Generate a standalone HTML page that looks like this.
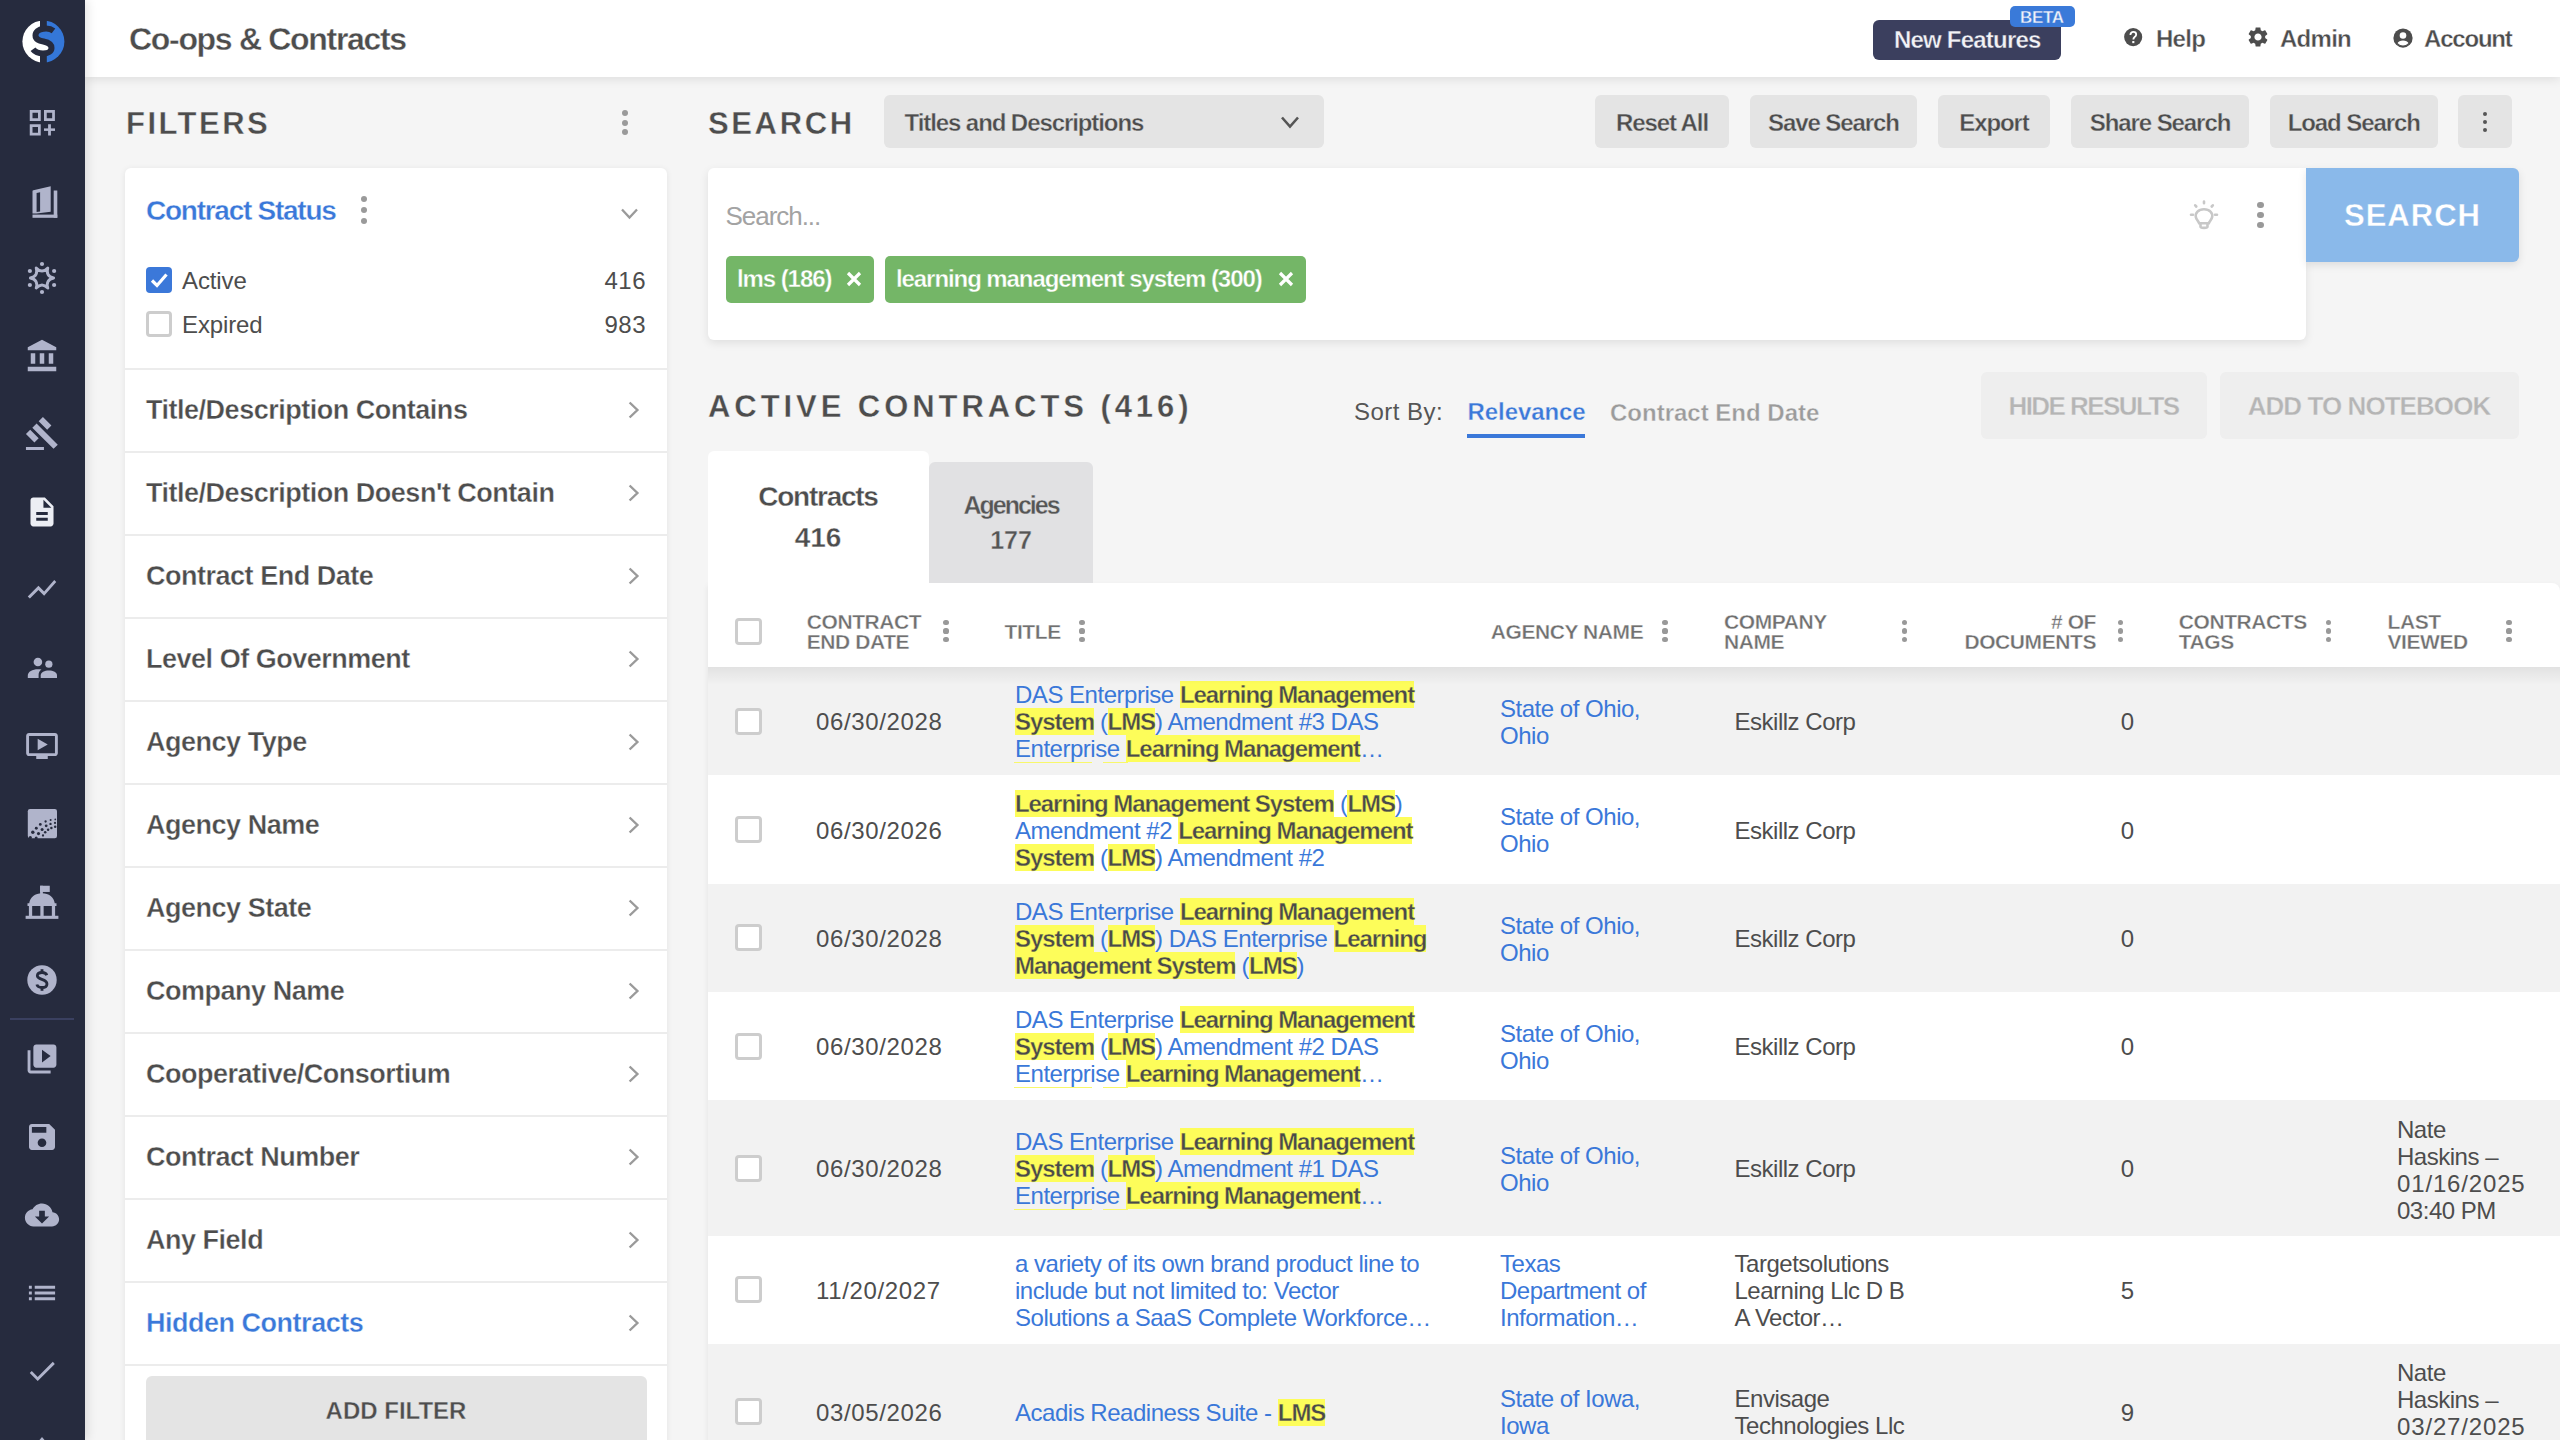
<!DOCTYPE html><html><head><meta charset='utf-8'><style>
html,body{margin:0;padding:0;width:2560px;height:1440px;overflow:hidden;background:#f5f5f5;font-family:"Liberation Sans",sans-serif;}
.r,.t{position:absolute;}
.t{white-space:nowrap;}
svg.r{display:block;overflow:visible}
</style></head><body>
<div class='r' style='left:85px;top:0px;width:2475px;height:77px;background:#ffffff;box-shadow:0 2px 10px rgba(0,0,0,0.10);z-index:2'></div>
<div class='t ' style='left:129px;top:22.91px;font-size:32px;line-height:32px;font-weight:700;color:#4d4d4d;letter-spacing:-0.041em;z-index:3;-webkit-text-stroke:0.35px #fff'>Co-ops &amp; Contracts</div>
<div class='r' style='left:1873px;top:19.5px;width:188px;height:40.5px;background:#3b3f5e;border-radius:6px;z-index:3'></div>
<div class='t ' style='left:1894px;top:28.08px;font-size:24px;line-height:24px;font-weight:700;color:#f2f2f6;letter-spacing:-0.033em;z-index:4;-webkit-text-stroke:0.35px #3b3f5e'>New Features</div>
<div class='r' style='left:2010px;top:6px;width:65px;height:21px;background:#3a7ad9;border-radius:5px;z-index:4'></div>
<div class='t ' style='left:2020px;top:9.01px;font-size:17px;line-height:17px;font-weight:700;color:#eef2fa;letter-spacing:-0.02em;z-index:5;-webkit-text-stroke:0.35px #3a7ad9'>BETA</div>
<svg class='r' style='left:2123px;top:27px;z-index:4' width='22' height='22' viewBox='0 0 24 24'><circle cx='11.1' cy='11' r='9.9' fill='#4d4d4d'/><path d='M8.1 8.6 C8.1 6.6 9.5 5.4 11.3 5.4 C13.1 5.4 14.4 6.6 14.4 8.2 C14.4 9.7 13.4 10.4 12.5 11.1 C11.7 11.7 11.3 12.3 11.3 13.6' fill='none' stroke='#fff' stroke-width='2'/><rect x='10.1' y='15.3' width='2.3' height='2.3' fill='#fff'/></svg>
<div class='t ' style='left:2156px;top:26.68px;font-size:24px;line-height:24px;font-weight:700;color:#4d4d4d;letter-spacing:-0.03em;z-index:4;-webkit-text-stroke:0.35px #fff'>Help</div>
<svg class='r' style='left:2246px;top:25px;z-index:4' width='24' height='24' viewBox='0 0 24 24'><path fill='#4d4d4d' d='M19.14 12.94c.04-.3.06-.61.06-.94 0-.32-.02-.64-.07-.94l2.03-1.58c.18-.14.23-.41.12-.61l-1.92-3.32c-.12-.22-.37-.29-.59-.22l-2.39.96c-.5-.38-1.03-.7-1.62-.94l-.36-2.54c-.04-.24-.24-.41-.48-.41h-3.84c-.24 0-.43.17-.47.41l-.36 2.54c-.59.24-1.13.57-1.62.94l-2.39-.96c-.22-.08-.47 0-.59.22L2.74 8.87c-.12.21-.08.47.12.61l2.03 1.58c-.05.3-.09.63-.09.94s.02.64.07.94l-2.03 1.58c-.18.14-.23.41-.12.61l1.92 3.32c.12.22.37.29.59.22l2.39-.96c.5.38 1.03.7 1.62.94l.36 2.54c.05.24.24.41.48.41h3.84c.24 0 .44-.17.47-.41l.36-2.54c.59-.24 1.13-.56 1.62-.94l2.39.96c.22.08.47 0 .59-.22l1.92-3.32c.12-.22.07-.47-.12-.61l-2.01-1.58zM12 15.6c-1.98 0-3.6-1.62-3.6-3.6s1.62-3.6 3.6-3.6 3.6 1.62 3.6 3.6-1.62 3.6-3.6 3.6z'/></svg>
<div class='t ' style='left:2280px;top:26.68px;font-size:24px;line-height:24px;font-weight:700;color:#4d4d4d;letter-spacing:-0.03em;z-index:4;-webkit-text-stroke:0.35px #fff'>Admin</div>
<svg class='r' style='left:2392px;top:27px;z-index:4' width='22' height='22' viewBox='0 0 24 24'><circle cx='12' cy='12' r='10.5' fill='#4d4d4d'/><circle cx='12' cy='9.3' r='3.6' fill='#fff'/><path d='M5.6 18.2c1.2-2.3 3.6-3.4 6.4-3.4s5.2 1.1 6.4 3.4c-1.6 1.6-3.8 2.6-6.4 2.6s-4.8-1-6.4-2.6z' fill='#fff'/><circle cx='12' cy='12' r='8.8' fill='none' stroke='#4d4d4d' stroke-width='1.2'/></svg>
<div class='t ' style='left:2424px;top:26.68px;font-size:24px;line-height:24px;font-weight:700;color:#4d4d4d;letter-spacing:-0.05em;z-index:4;-webkit-text-stroke:0.35px #fff'>Account</div>
<div class='r' style='left:0px;top:0px;width:85px;height:1440px;background:#262b3e;z-index:10;box-shadow:2px 0 10px rgba(0,0,0,0.12)'></div>
<svg class='r' style='left:21px;top:20px;z-index:11' width='44' height='44' viewBox='0 0 44 44'>
<path d='M22.4 0.5 A21 21 0 0 0 22.4 42.5 Z' fill='#ffffff'/>
<path d='M22.4 0.5 A21 21 0 0 1 22.4 42.5 Z' fill='#3477d8'/>
<path d='M16.5 12.5 L23.5 10.5 V20 L16.5 18.5 Z' fill='#3477d8'/>
<path d='M21.3 23 L28 25 L28 31.5 L21.3 31.5 Z' fill='#ffffff'/>
<rect x='19' y='0' width='6.8' height='7.5' fill='#262b3e'/>
<rect x='19' y='36' width='6.8' height='8' fill='#262b3e'/>
<path d='M32.5 10.8 C29.5 8.6 26 8.3 22.5 8.8 C17.5 9.3 14.5 12 14.5 15.5 C14.5 19.5 18 20.5 22.5 21.5 C27.5 22.5 30.5 24.5 30.5 28 C30.5 31.5 27 33.5 22 33.5 C17.5 33.5 14 32 12 29.3' fill='none' stroke='#262b3e' stroke-width='6'/>
</svg>
<svg class='r' style='left:24px;top:104px;z-index:11' width='36' height='36' viewBox='0 0 36 36'><g fill='none' stroke='#b0b4cb' stroke-width='2.75'><rect x='7.125' y='7.375' width='8.25' height='8.25'/><rect x='21.375' y='7.375' width='8.15' height='8.25'/><rect x='7.125' y='21.625' width='8.25' height='8.5'/></g><g fill='#b0b4cb'><rect x='20' y='24.4' width='11' height='2.5'/><rect x='24.1' y='20.25' width='2.8' height='11.25'/></g></svg>
<svg class='r' style='left:24px;top:184px;z-index:11' width='36' height='36' viewBox='0 0 36 36'><g fill='#b0b4cb'><path d='M8.5 7.3 Q8.5 6.4 9.4 6.2 L26.7 2.2 V27.7 L12.6 29.6 H8.5 Z'/><rect x='8.5' y='30.6' width='24.8' height='3.2'/><rect x='29.7' y='6.5' width='3.6' height='27.3'/></g><path d='M12.6 9 L16.1 8.3 V27.4 L12.6 27.9 Z' fill='#262b3e'/></svg>
<svg class='r' style='left:24px;top:260.4px;z-index:11' width='36' height='36' viewBox='0 0 36 36'><g transform='translate(18,18)'><path fill='none' stroke='#b0b4cb' stroke-width='2.9' stroke-linejoin='round' d='M11.60 0.00 Q3.38 1.95 5.80 10.05 Q0.00 3.90 -5.80 10.05 Q-3.38 1.95 -11.60 0.00 Q-3.38 -1.95 -5.80 -10.05 Q-0.00 -3.90 5.80 -10.05 Q3.38 -1.95 11.60 0.00 Z'/><g fill='#b0b4cb'><circle cx='12.12' cy='7.00' r='2.1'/><circle cx='0.00' cy='14.00' r='2.1'/><circle cx='-12.12' cy='7.00' r='2.1'/><circle cx='-12.12' cy='-7.00' r='2.1'/><circle cx='-0.00' cy='-14.00' r='2.1'/><circle cx='12.12' cy='-7.00' r='2.1'/></g></g></svg>
<svg class='r' style='left:24.0px;top:339.0px;z-index:11' width='36' height='36' viewBox='0 0 24 24'><g transform='translate(12,12) scale(1.0) translate(-12,-12)'><path fill='#b0b4cb' d='M4 10v7h3v-7H4zm6 0v7h3v-7h-3zM2 22h19v-3H2v3zm14-12v7h3v-7h-3zm-4.5-9L2 6v2h19V6l-9.5-5z' transform='translate(0.5,-0.5)'/></g></svg>
<svg class='r' style='left:24.0px;top:415.8px;z-index:11' width='36' height='36' viewBox='0 0 24 24'><g transform='translate(12,12) scale(1.0) translate(-12,-12)'><path fill='#b0b4cb' d='M1 21h12v2H1zM5.245 8.07l2.83-2.827 14.14 14.142-2.828 2.828zM12.317 1l5.657 5.656-2.83 2.83-5.654-5.66zM3.825 9.485l5.657 5.657-2.828 2.828-5.657-5.657z' transform='translate(0.3,-0.3)'/></g></svg>
<svg class='r' style='left:24.0px;top:494.20000000000005px;z-index:11' width='36' height='36' viewBox='0 0 24 24'><g transform='translate(12,12) scale(0.96) translate(-12,-12)'><path fill='#eceef4' d='M14 2H6c-1.1 0-1.99.9-1.99 2L4 20c0 1.1.89 2 1.99 2H18c1.1 0 2-.9 2-2V8l-6-6zm2 16H8v-2h8v2zm0-4H8v-2h8v2zm-3-5V3.5L18.5 9H13z'/></g></svg>
<svg class='r' style='left:24.0px;top:572.0px;z-index:11' width='36' height='36' viewBox='0 0 24 24'><g transform='translate(12,12) scale(0.95) translate(-12,-12)'><path fill='#b0b4cb' d='M3.5 18.49l6-6.01 4 4L22 6.92l-1.41-1.41-7.09 7.97-4-4L2 16.99z' transform='translate(0,-0.5)'/></g></svg>
<svg class='r' style='left:24px;top:650px;z-index:11' width='36' height='36' viewBox='0 0 36 36'><g fill='#b0b4cb'><circle cx='13.9' cy='12' r='4.3'/><circle cx='24.85' cy='14.2' r='3.6'/><path d='M3.8 28 V25.5 C3.8 21.5 8.5 19.2 13.9 19.2 C15.2 19.2 16.4 19.35 17.5 19.6 C15.6 20.8 14.6 22.8 14.6 25 V28 Z'/><path d='M16.7 28 V25.5 C16.7 22 20.5 20.5 24.85 20.5 C29.2 20.5 33 22 33 25.5 V28 Z'/></g></svg>
<svg class='r' style='left:24.0px;top:728.0px;z-index:11' width='36' height='36' viewBox='0 0 24 24'><g transform='translate(12,12) scale(0.96) translate(-12,-12)'><path fill='#b0b4cb' d='M21 3H3c-1.11 0-2 .89-2 2v12c0 1.1.89 2 2 2h5v2h8v-2h5c1.1 0 1.99-.9 1.99-2L23 5c0-1.11-.9-2-2-2zm0 14H3V5h18v12zM16 11l-7 4V7z'/></g></svg>
<svg class='r' style='left:24px;top:804px;z-index:11' width='36' height='36' viewBox='0 0 36 36'><rect x='3.8' y='5' width='29.2' height='29.2' rx='2.2' fill='#b0b4cb'/><g fill='#262b3e'><circle cx='8.80' cy='28.30' r='1.7'/><circle cx='12.30' cy='24.20' r='1.45'/><circle cx='16.30' cy='20.40' r='1.4'/><circle cx='21.60' cy='17.50' r='1.15'/><circle cx='26.60' cy='16.10' r='1.0'/><circle cx='31.30' cy='15.40' r='0.85'/><circle cx='14.50' cy='29.60' r='1.55'/><circle cx='18.10' cy='25.60' r='1.5'/><circle cx='22.20' cy='21.80' r='1.4'/><circle cx='26.50' cy='19.90' r='1.2'/><circle cx='31.00' cy='18.90' r='1.1'/><circle cx='19.00' cy='31.50' r='1.15'/><circle cx='21.20' cy='28.30' r='1.25'/><circle cx='24.10' cy='25.70' r='1.25'/><circle cx='27.40' cy='23.90' r='1.25'/><circle cx='31.20' cy='22.80' r='1.25'/><circle cx='6.30' cy='33.60' r='1.6'/><circle cx='12.20' cy='34.10' r='1.5'/></g></svg>
<svg class='r' style='left:24.0px;top:884.9px;z-index:11' width='36' height='36' viewBox='0 0 24 24'><g transform='translate(12,12) scale(1.15) translate(-12,-12)'><g fill='#b0b4cb'><rect x='10.9' y='2' width='1.6' height='5'/><rect x='10.9' y='2' width='5.6' height='3.6'/><path d='M4.6 12.2 C5 8.6 8 6.3 12 6.3 C16 6.3 19 8.6 19.4 12.2 H20.4 V13.7 H3.6 V12.2z'/><rect x='4.4' y='13.7' width='1.9' height='6'/><rect x='11.05' y='13.7' width='1.9' height='6'/><rect x='17.7' y='13.7' width='1.9' height='6'/><rect x='2.5' y='19.4' width='19' height='1.8'/></g></g></svg>
<svg class='r' style='left:24.0px;top:961.5px;z-index:11' width='36' height='36' viewBox='0 0 24 24'><g transform='translate(12,12) scale(1.0) translate(-12,-12)'><circle cx='12' cy='12' r='9.8' fill='#b0b4cb'/><path fill='none' stroke='#262b3e' stroke-width='1.9' d='M15.2 8.8 C14.8 7.6 13.6 7 12 7 C10.1 7 8.9 7.9 8.9 9.2 C8.9 12.2 15.3 11 15.3 14.6 C15.3 16 14 17 12 17 C10.2 17 8.9 16.3 8.6 15'/><rect x='11.05' y='4.8' width='1.9' height='2.8' fill='#262b3e'/><rect x='11.05' y='16.4' width='1.9' height='2.8' fill='#262b3e'/></g></svg>
<div class='r' style='left:10px;top:1018px;width:64px;height:2px;background:#3a4060;z-index:11'></div>
<svg class='r' style='left:24.0px;top:1040.7px;z-index:11' width='36' height='36' viewBox='0 0 24 24'><g transform='translate(12,12) scale(0.96) translate(-12,-12)'><path fill='#b0b4cb' d='M4 6H2v14c0 1.1.9 2 2 2h14v-2H4V6zm16-4H8c-1.1 0-2 .9-2 2v12c0 1.1.9 2 2 2h12c1.1 0 2-.9 2-2V4c0-1.1-.9-2-2-2zm-8 12.5v-9l6 4.5-6 4.5z'/></g></svg>
<svg class='r' style='left:24.0px;top:1119.0px;z-index:11' width='36' height='36' viewBox='0 0 24 24'><g transform='translate(12,12) scale(0.963) translate(-12,-12)'><path fill='#b0b4cb' d='M17 3H5c-1.11 0-2 .9-2 2v14c0 1.1.89 2 2 2h14c1.1 0 2-.9 2-2V7l-4-4zm-5 16c-1.66 0-3-1.34-3-3s1.34-3 3-3 3 1.34 3 3-1.34 3-3 3zm3-10H5V5h10v4z'/></g></svg>
<svg class='r' style='left:24.0px;top:1196.5px;z-index:11' width='36' height='36' viewBox='0 0 24 24'><g transform='translate(12,12) scale(0.95) translate(-12,-12)'><path fill='#b0b4cb' d='M19.35 10.04C18.67 6.59 15.64 4 12 4 9.11 4 6.6 5.64 5.35 8.04 2.34 8.36 0 10.91 0 14c0 3.31 2.69 6 6 6h13c2.76 0 5-2.24 5-5 0-2.64-2.05-4.78-4.65-4.96zM17 13l-5 5-5-5h3V9h4v4h3z'/></g></svg>
<svg class='r' style='left:24.0px;top:1274.8px;z-index:11' width='36' height='36' viewBox='0 0 24 24'><g transform='translate(12,12) scale(0.97) translate(-12,-12)'><path fill='#b0b4cb' d='M3 13h2v-2H3v2zm0 4h2v-2H3v2zm0-8h2V7H3v2zm4 4h14v-2H7v2zm0 4h14v-2H7v2zM7 7v2h14V7H7z'/></g></svg>
<svg class='r' style='left:24.0px;top:1353.0px;z-index:11' width='36' height='36' viewBox='0 0 24 24'><g transform='translate(12,12) scale(0.95) translate(-12,-12)'><path fill='#b0b4cb' d='M9 16.17L4.83 12l-1.42 1.41L9 19 21 7l-1.41-1.41z'/></g></svg>
<svg class='r' style='left:24.0px;top:1434.0px;z-index:11' width='36' height='36' viewBox='0 0 24 24'><g transform='translate(12,12) scale(1.0) translate(-12,-12)'><path fill='#b0b4cb' d='M12 2 L17 8 H7 Z'/></g></svg>
<div class='t ' style='left:126px;top:107.75px;font-size:31px;line-height:31px;font-weight:700;color:#4d4d4d;letter-spacing:0.08em;;-webkit-text-stroke:0.35px #f5f5f5'>FILTERS</div>
<div class='r' style='left:622.0px;top:110.0px;width:6px;height:6px;border-radius:50%;background:#9a9a9a'></div>
<div class='r' style='left:622.0px;top:119.5px;width:6px;height:6px;border-radius:50%;background:#9a9a9a'></div>
<div class='r' style='left:622.0px;top:129.0px;width:6px;height:6px;border-radius:50%;background:#9a9a9a'></div>
<div class='r' style='left:125px;top:168px;width:542px;height:1300px;background:#ffffff;border-radius:6px;box-shadow:0 1px 6px rgba(0,0,0,0.08)'></div>
<div class='t ' style='left:146px;top:197.29px;font-size:28px;line-height:28px;font-weight:700;color:#3a78d9;letter-spacing:-0.045em;;-webkit-text-stroke:0.35px #fff'>Contract Status</div>
<div class='r' style='left:360.9px;top:196.1px;width:6.2px;height:6.2px;border-radius:50%;background:#9a9a9a'></div>
<div class='r' style='left:360.9px;top:206.9px;width:6.2px;height:6.2px;border-radius:50%;background:#9a9a9a'></div>
<div class='r' style='left:360.9px;top:217.7px;width:6.2px;height:6.2px;border-radius:50%;background:#9a9a9a'></div>
<svg class='r' style='left:600px;top:190px;' width='60' height='40' viewBox='0 0 60 40'><path d='M22 19.5 L29.5 27.5 L37 19.5' fill='none' stroke='#9a9a9a' stroke-width='2.3'/></svg>
<div class='r' style='left:146px;top:267px;width:26px;height:26px;background:#3b78d9;border-radius:4px'></div>
<svg class='r' style='left:146px;top:267px;' width='26' height='26' viewBox='0 0 26 26'><path d='M6 13.5 L11 18.5 L20.5 7.5' fill='none' stroke='#fff' stroke-width='3.2'/></svg>
<div class='t ' style='left:182px;top:269.18px;font-size:24px;line-height:24px;font-weight:400;color:#4d4d4d;letter-spacing:-0.005em;'>Active</div>
<div class='t ' style='right:1914px;top:269.18px;font-size:24px;line-height:24px;font-weight:400;color:#4d4d4d;letter-spacing:0.02em;'>416</div>
<div class='r' style='left:146px;top:311px;width:26px;height:26px;background:#ffffff;border-radius:4px;box-sizing:border-box;border:3px solid #cdcdcd'></div>
<div class='t ' style='left:182px;top:313.18px;font-size:24px;line-height:24px;font-weight:400;color:#4d4d4d;letter-spacing:-0.005em;'>Expired</div>
<div class='t ' style='right:1914px;top:313.18px;font-size:24px;line-height:24px;font-weight:400;color:#4d4d4d;letter-spacing:0.02em;'>983</div>
<div class='r' style='left:125px;top:368px;width:542px;height:1.5px;background:#ececec;'></div>
<div class='t ' style='left:146px;top:396.84px;font-size:27px;line-height:27px;font-weight:700;color:#4d4d4d;letter-spacing:-0.018em;;-webkit-text-stroke:0.35px #fff'>Title/Description Contains</div>
<svg class='r' style='left:600px;top:368px;' width='60' height='83' viewBox='0 0 60 83'><path d='M29.6 34.5 L37.4 42 L29.6 49.5' fill='none' stroke='#9a9a9a' stroke-width='2.4'/></svg>
<div class='r' style='left:125px;top:451px;width:542px;height:1.5px;background:#ececec;'></div>
<div class='t ' style='left:146px;top:479.84px;font-size:27px;line-height:27px;font-weight:700;color:#4d4d4d;letter-spacing:-0.018em;;-webkit-text-stroke:0.35px #fff'>Title/Description Doesn't Contain</div>
<svg class='r' style='left:600px;top:451px;' width='60' height='83' viewBox='0 0 60 83'><path d='M29.6 34.5 L37.4 42 L29.6 49.5' fill='none' stroke='#9a9a9a' stroke-width='2.4'/></svg>
<div class='r' style='left:125px;top:534px;width:542px;height:1.5px;background:#ececec;'></div>
<div class='t ' style='left:146px;top:562.84px;font-size:27px;line-height:27px;font-weight:700;color:#4d4d4d;letter-spacing:-0.018em;;-webkit-text-stroke:0.35px #fff'>Contract End Date</div>
<svg class='r' style='left:600px;top:534px;' width='60' height='83' viewBox='0 0 60 83'><path d='M29.6 34.5 L37.4 42 L29.6 49.5' fill='none' stroke='#9a9a9a' stroke-width='2.4'/></svg>
<div class='r' style='left:125px;top:617px;width:542px;height:1.5px;background:#ececec;'></div>
<div class='t ' style='left:146px;top:645.84px;font-size:27px;line-height:27px;font-weight:700;color:#4d4d4d;letter-spacing:-0.018em;;-webkit-text-stroke:0.35px #fff'>Level Of Government</div>
<svg class='r' style='left:600px;top:617px;' width='60' height='83' viewBox='0 0 60 83'><path d='M29.6 34.5 L37.4 42 L29.6 49.5' fill='none' stroke='#9a9a9a' stroke-width='2.4'/></svg>
<div class='r' style='left:125px;top:700px;width:542px;height:1.5px;background:#ececec;'></div>
<div class='t ' style='left:146px;top:728.84px;font-size:27px;line-height:27px;font-weight:700;color:#4d4d4d;letter-spacing:-0.018em;;-webkit-text-stroke:0.35px #fff'>Agency Type</div>
<svg class='r' style='left:600px;top:700px;' width='60' height='83' viewBox='0 0 60 83'><path d='M29.6 34.5 L37.4 42 L29.6 49.5' fill='none' stroke='#9a9a9a' stroke-width='2.4'/></svg>
<div class='r' style='left:125px;top:783px;width:542px;height:1.5px;background:#ececec;'></div>
<div class='t ' style='left:146px;top:811.84px;font-size:27px;line-height:27px;font-weight:700;color:#4d4d4d;letter-spacing:-0.018em;;-webkit-text-stroke:0.35px #fff'>Agency Name</div>
<svg class='r' style='left:600px;top:783px;' width='60' height='83' viewBox='0 0 60 83'><path d='M29.6 34.5 L37.4 42 L29.6 49.5' fill='none' stroke='#9a9a9a' stroke-width='2.4'/></svg>
<div class='r' style='left:125px;top:866px;width:542px;height:1.5px;background:#ececec;'></div>
<div class='t ' style='left:146px;top:894.84px;font-size:27px;line-height:27px;font-weight:700;color:#4d4d4d;letter-spacing:-0.018em;;-webkit-text-stroke:0.35px #fff'>Agency State</div>
<svg class='r' style='left:600px;top:866px;' width='60' height='83' viewBox='0 0 60 83'><path d='M29.6 34.5 L37.4 42 L29.6 49.5' fill='none' stroke='#9a9a9a' stroke-width='2.4'/></svg>
<div class='r' style='left:125px;top:949px;width:542px;height:1.5px;background:#ececec;'></div>
<div class='t ' style='left:146px;top:977.84px;font-size:27px;line-height:27px;font-weight:700;color:#4d4d4d;letter-spacing:-0.018em;;-webkit-text-stroke:0.35px #fff'>Company Name</div>
<svg class='r' style='left:600px;top:949px;' width='60' height='83' viewBox='0 0 60 83'><path d='M29.6 34.5 L37.4 42 L29.6 49.5' fill='none' stroke='#9a9a9a' stroke-width='2.4'/></svg>
<div class='r' style='left:125px;top:1032px;width:542px;height:1.5px;background:#ececec;'></div>
<div class='t ' style='left:146px;top:1060.84px;font-size:27px;line-height:27px;font-weight:700;color:#4d4d4d;letter-spacing:-0.018em;;-webkit-text-stroke:0.35px #fff'>Cooperative/Consortium</div>
<svg class='r' style='left:600px;top:1032px;' width='60' height='83' viewBox='0 0 60 83'><path d='M29.6 34.5 L37.4 42 L29.6 49.5' fill='none' stroke='#9a9a9a' stroke-width='2.4'/></svg>
<div class='r' style='left:125px;top:1115px;width:542px;height:1.5px;background:#ececec;'></div>
<div class='t ' style='left:146px;top:1143.84px;font-size:27px;line-height:27px;font-weight:700;color:#4d4d4d;letter-spacing:-0.018em;;-webkit-text-stroke:0.35px #fff'>Contract Number</div>
<svg class='r' style='left:600px;top:1115px;' width='60' height='83' viewBox='0 0 60 83'><path d='M29.6 34.5 L37.4 42 L29.6 49.5' fill='none' stroke='#9a9a9a' stroke-width='2.4'/></svg>
<div class='r' style='left:125px;top:1198px;width:542px;height:1.5px;background:#ececec;'></div>
<div class='t ' style='left:146px;top:1226.84px;font-size:27px;line-height:27px;font-weight:700;color:#4d4d4d;letter-spacing:-0.018em;;-webkit-text-stroke:0.35px #fff'>Any Field</div>
<svg class='r' style='left:600px;top:1198px;' width='60' height='83' viewBox='0 0 60 83'><path d='M29.6 34.5 L37.4 42 L29.6 49.5' fill='none' stroke='#9a9a9a' stroke-width='2.4'/></svg>
<div class='r' style='left:125px;top:1281px;width:542px;height:1.5px;background:#ececec;'></div>
<div class='t ' style='left:146px;top:1309.84px;font-size:27px;line-height:27px;font-weight:700;color:#3a78d9;letter-spacing:-0.018em;;-webkit-text-stroke:0.35px #fff'>Hidden Contracts</div>
<svg class='r' style='left:600px;top:1281px;' width='60' height='83' viewBox='0 0 60 83'><path d='M29.6 34.5 L37.4 42 L29.6 49.5' fill='none' stroke='#9a9a9a' stroke-width='2.4'/></svg>
<div class='r' style='left:125px;top:1364px;width:542px;height:1.5px;background:#ececec;'></div>
<div class='r' style='left:146px;top:1376px;width:501px;height:80px;background:#e4e4e4;border-radius:6px'></div>
<div class='t ' style='left:-104px;width:1000px;text-align:center;top:1398.68px;font-size:24px;line-height:24px;font-weight:700;color:#4d4d4d;letter-spacing:0.0em;;-webkit-text-stroke:0.35px #e4e4e4'>ADD FILTER</div>
<div class='t ' style='left:708px;top:107.75px;font-size:31px;line-height:31px;font-weight:700;color:#4d4d4d;letter-spacing:0.085em;;-webkit-text-stroke:0.35px #f5f5f5'>SEARCH</div>
<div class='r' style='left:884px;top:95px;width:440px;height:53px;background:#e4e4e4;border-radius:6px'></div>
<div class='t ' style='left:904.5px;top:110.68px;font-size:24px;line-height:24px;font-weight:700;color:#4d4d4d;letter-spacing:-0.045em;;-webkit-text-stroke:0.35px #e4e4e4'>Titles and Descriptions</div>
<svg class='r' style='left:1270px;top:105px;' width='40' height='40' viewBox='0 0 40 40'><path d='M12 12.5 L20 21.5 L28 12.5' fill='none' stroke='#555' stroke-width='2.6'/></svg>
<div class='r' style='left:1595px;top:95px;width:134px;height:53px;background:#e4e4e4;border-radius:6px'></div>
<div class='t ' style='left:1162.0px;width:1000px;text-align:center;top:110.68px;font-size:24px;line-height:24px;font-weight:700;color:#4d4d4d;letter-spacing:-0.045em;;-webkit-text-stroke:0.35px #e4e4e4'>Reset All</div>
<div class='r' style='left:1750px;top:95px;width:167px;height:53px;background:#e4e4e4;border-radius:6px'></div>
<div class='t ' style='left:1333.5px;width:1000px;text-align:center;top:110.68px;font-size:24px;line-height:24px;font-weight:700;color:#4d4d4d;letter-spacing:-0.045em;;-webkit-text-stroke:0.35px #e4e4e4'>Save Search</div>
<div class='r' style='left:1938px;top:95px;width:112px;height:53px;background:#e4e4e4;border-radius:6px'></div>
<div class='t ' style='left:1494.0px;width:1000px;text-align:center;top:110.68px;font-size:24px;line-height:24px;font-weight:700;color:#4d4d4d;letter-spacing:-0.045em;;-webkit-text-stroke:0.35px #e4e4e4'>Export</div>
<div class='r' style='left:2071px;top:95px;width:178px;height:53px;background:#e4e4e4;border-radius:6px'></div>
<div class='t ' style='left:1660.0px;width:1000px;text-align:center;top:110.68px;font-size:24px;line-height:24px;font-weight:700;color:#4d4d4d;letter-spacing:-0.045em;;-webkit-text-stroke:0.35px #e4e4e4'>Share Search</div>
<div class='r' style='left:2270px;top:95px;width:167.5px;height:53px;background:#e4e4e4;border-radius:6px'></div>
<div class='t ' style='left:1853.75px;width:1000px;text-align:center;top:110.68px;font-size:24px;line-height:24px;font-weight:700;color:#4d4d4d;letter-spacing:-0.045em;;-webkit-text-stroke:0.35px #e4e4e4'>Load Search</div>
<div class='r' style='left:2458px;top:95px;width:54px;height:53px;background:#e4e4e4;border-radius:6px'></div>
<div class='r' style='left:2482.8px;top:111.8px;width:4.4px;height:4.4px;border-radius:50%;background:#555'></div>
<div class='r' style='left:2482.8px;top:119.8px;width:4.4px;height:4.4px;border-radius:50%;background:#555'></div>
<div class='r' style='left:2482.8px;top:127.8px;width:4.4px;height:4.4px;border-radius:50%;background:#555'></div>
<div class='r' style='left:708px;top:168px;width:1598px;height:172px;background:#ffffff;border-radius:6px 0 6px 6px;box-shadow:0 3px 10px rgba(0,0,0,0.09)'></div>
<div class='t ' style='left:725.5px;top:202.99px;font-size:26px;line-height:26px;font-weight:400;color:#a3a3a3;letter-spacing:-0.04em;'>Search...</div>
<svg class='r' style='left:2186px;top:197px;' width='36' height='36' viewBox='0 0 36 36'><g fill='none' stroke='#c8c8c8' stroke-width='2.6' stroke-linecap='round'><path d='M13.2 26.3 C12.5 24 10.4 22.6 9.9 20.3 C9 16 12.4 12.3 18 12.3 C23.6 12.3 27 16 26.1 20.3 C25.6 22.6 23.5 24 22.8 26.3 Z'/><path d='M14.5 26.5 V29.5 C14.5 31.5 21.5 31.5 21.5 29.5 V26.5'/><path d='M18 4.6 V6.2 M9.2 8.3 L10.3 9.5 M26.8 8.3 L25.7 9.5 M5 17.8 H7 M29 17.8 H31'/></g></svg>
<div class='r' style='left:2257.0px;top:201.5px;width:6.6px;height:6.6px;border-radius:50%;background:#999'></div>
<div class='r' style='left:2257.0px;top:211.7px;width:6.6px;height:6.6px;border-radius:50%;background:#999'></div>
<div class='r' style='left:2257.0px;top:221.9px;width:6.6px;height:6.6px;border-radius:50%;background:#999'></div>
<div class='r' style='left:2306px;top:168px;width:213px;height:94px;background:#8ab9ea;border-radius:0 6px 6px 0;box-shadow:0 3px 8px rgba(0,0,0,0.10)'></div>
<div class='t ' style='left:1912.5px;width:1000px;text-align:center;top:199.75px;font-size:31px;line-height:31px;font-weight:700;color:#ffffff;letter-spacing:0.033em;;-webkit-text-stroke:0.35px #8ab9ea'>SEARCH</div>
<div class='r' style='left:726px;top:256px;width:148px;height:46.5px;background:#74b667;border-radius:5px'></div>
<div class='t ' style='left:737px;top:266.68px;font-size:24px;line-height:24px;font-weight:700;color:#ffffff;letter-spacing:-0.045em;;-webkit-text-stroke:0.35px #74b667'>lms (186)</div>
<svg class='r' style='left:844px;top:269px;' width='20' height='20' viewBox='0 0 20 20'><path d='M4 4 L16 16 M16 4 L4 16' stroke='#fff' stroke-width='3.2'/></svg>
<div class='r' style='left:884.75px;top:256px;width:421px;height:46.5px;background:#74b667;border-radius:5px'></div>
<div class='t ' style='left:896px;top:266.68px;font-size:24px;line-height:24px;font-weight:700;color:#ffffff;letter-spacing:-0.045em;;-webkit-text-stroke:0.35px #74b667'>learning management system (300)</div>
<svg class='r' style='left:1276px;top:269px;' width='20' height='20' viewBox='0 0 20 20'><path d='M4 4 L16 16 M16 4 L4 16' stroke='#fff' stroke-width='3.2'/></svg>
<div class='t ' style='left:708px;top:391.25px;font-size:31px;line-height:31px;font-weight:700;color:#4d4d4d;letter-spacing:0.127em;;-webkit-text-stroke:0.35px #f5f5f5'>ACTIVE CONTRACTS (416)</div>
<div class='t ' style='left:1354px;top:400.18px;font-size:24px;line-height:24px;font-weight:400;color:#555;letter-spacing:0.02em;'>Sort By:</div>
<div class='t ' style='left:1467.5px;top:400.18px;font-size:24px;line-height:24px;font-weight:700;color:#3a78d9;letter-spacing:-0.003em;;-webkit-text-stroke:0.35px #f5f5f5'>Relevance</div>
<div class='r' style='left:1467px;top:434px;width:118px;height:4px;background:#3a78d9;'></div>
<div class='t ' style='left:1610px;top:400.68px;font-size:24px;line-height:24px;font-weight:700;color:#9b9b9b;letter-spacing:0.0em;;-webkit-text-stroke:0.35px #f5f5f5'>Contract End Date</div>
<div class='r' style='left:1981px;top:372px;width:226px;height:67px;background:#eeeeee;border-radius:6px'></div>
<div class='t ' style='left:1593.5px;width:1000px;text-align:center;top:392.69px;font-size:26px;line-height:26px;font-weight:700;color:#b5b5b5;letter-spacing:-0.06em;;-webkit-text-stroke:0.35px #eeeeee'>HIDE RESULTS</div>
<div class='r' style='left:2220px;top:372px;width:299px;height:67px;background:#eeeeee;border-radius:6px'></div>
<div class='t ' style='left:1869px;width:1000px;text-align:center;top:392.69px;font-size:26px;line-height:26px;font-weight:700;color:#b5b5b5;letter-spacing:-0.036em;;-webkit-text-stroke:0.35px #eeeeee'>ADD TO NOTEBOOK</div>
<div class='r' style='left:929px;top:462px;width:164px;height:121px;background:#e1e1e3;border-radius:6px 6px 0 0;z-index:2'></div>
<div class='r' style='left:708px;top:451px;width:221px;height:133px;background:#ffffff;border-radius:6px 6px 0 0;z-index:2'></div>
<div class='t ' style='left:318px;width:1000px;text-align:center;top:483.29px;font-size:28px;line-height:28px;font-weight:700;color:#4d4d4d;letter-spacing:-0.045em;z-index:3;-webkit-text-stroke:0.35px #fff'>Contracts</div>
<div class='t ' style='left:318px;width:1000px;text-align:center;top:523.79px;font-size:28px;line-height:28px;font-weight:700;color:#4d4d4d;letter-spacing:0.0em;z-index:3;-webkit-text-stroke:0.35px #fff'>416</div>
<div class='t ' style='left:511px;width:1000px;text-align:center;top:492.83px;font-size:25px;line-height:25px;font-weight:700;color:#555;letter-spacing:-0.08em;z-index:3;-webkit-text-stroke:0.35px #e1e1e3'>Agencies</div>
<div class='t ' style='left:511px;width:1000px;text-align:center;top:527.83px;font-size:25px;line-height:25px;font-weight:700;color:#555;letter-spacing:0.0em;z-index:3;-webkit-text-stroke:0.35px #e1e1e3'>177</div>
<div class='r' style='left:708px;top:583px;width:1852px;height:900px;background:#ffffff;border-radius:0 8px 0 0;box-shadow:0 3px 6px rgba(0,0,0,0.08)'></div>
<div class='r' style='left:735px;top:618px;width:27px;height:27px;background:#fff;border-radius:4px;box-sizing:border-box;border:3px solid #cdcdcd;z-index:3'></div>
<div class='t ' style='left:806.75px;top:611.22px;font-size:21px;line-height:21px;font-weight:700;color:#707070;letter-spacing:-0.02em;z-index:3;-webkit-text-stroke:0.35px #fff'>CONTRACT</div>
<div class='t ' style='left:806.75px;top:631.22px;font-size:21px;line-height:21px;font-weight:700;color:#707070;letter-spacing:-0.02em;z-index:3;-webkit-text-stroke:0.35px #fff'>END DATE</div>
<div class='r' style='left:943.4px;top:619.8px;width:5.2px;height:5.2px;border-radius:50%;background:#999'></div>
<div class='r' style='left:943.4px;top:628.4px;width:5.2px;height:5.2px;border-radius:50%;background:#999'></div>
<div class='r' style='left:943.4px;top:637.0px;width:5.2px;height:5.2px;border-radius:50%;background:#999'></div>
<div class='t ' style='left:1004.5px;top:621.22px;font-size:21px;line-height:21px;font-weight:700;color:#707070;letter-spacing:-0.02em;z-index:3;-webkit-text-stroke:0.35px #fff'>TITLE</div>
<div class='r' style='left:1079.4px;top:619.8px;width:5.2px;height:5.2px;border-radius:50%;background:#999'></div>
<div class='r' style='left:1079.4px;top:628.4px;width:5.2px;height:5.2px;border-radius:50%;background:#999'></div>
<div class='r' style='left:1079.4px;top:637.0px;width:5.2px;height:5.2px;border-radius:50%;background:#999'></div>
<div class='t ' style='left:1490.75px;top:621.22px;font-size:21px;line-height:21px;font-weight:700;color:#707070;letter-spacing:-0.02em;z-index:3;-webkit-text-stroke:0.35px #fff'>AGENCY NAME</div>
<div class='r' style='left:1662.4px;top:619.8px;width:5.2px;height:5.2px;border-radius:50%;background:#999'></div>
<div class='r' style='left:1662.4px;top:628.4px;width:5.2px;height:5.2px;border-radius:50%;background:#999'></div>
<div class='r' style='left:1662.4px;top:637.0px;width:5.2px;height:5.2px;border-radius:50%;background:#999'></div>
<div class='t ' style='left:1724px;top:611.22px;font-size:21px;line-height:21px;font-weight:700;color:#707070;letter-spacing:-0.02em;z-index:3;-webkit-text-stroke:0.35px #fff'>COMPANY</div>
<div class='t ' style='left:1724px;top:631.22px;font-size:21px;line-height:21px;font-weight:700;color:#707070;letter-spacing:-0.02em;z-index:3;-webkit-text-stroke:0.35px #fff'>NAME</div>
<div class='r' style='left:1901.9px;top:619.8px;width:5.2px;height:5.2px;border-radius:50%;background:#999'></div>
<div class='r' style='left:1901.9px;top:628.4px;width:5.2px;height:5.2px;border-radius:50%;background:#999'></div>
<div class='r' style='left:1901.9px;top:637.0px;width:5.2px;height:5.2px;border-radius:50%;background:#999'></div>
<div class='t ' style='right:464px;top:611.22px;font-size:21px;line-height:21px;font-weight:700;color:#707070;letter-spacing:-0.02em;z-index:3;-webkit-text-stroke:0.35px #fff'># OF</div>
<div class='t ' style='right:464px;top:631.22px;font-size:21px;line-height:21px;font-weight:700;color:#707070;letter-spacing:-0.02em;z-index:3;-webkit-text-stroke:0.35px #fff'>DOCUMENTS</div>
<div class='r' style='left:2117.9px;top:619.8px;width:5.2px;height:5.2px;border-radius:50%;background:#999'></div>
<div class='r' style='left:2117.9px;top:628.4px;width:5.2px;height:5.2px;border-radius:50%;background:#999'></div>
<div class='r' style='left:2117.9px;top:637.0px;width:5.2px;height:5.2px;border-radius:50%;background:#999'></div>
<div class='t ' style='left:2178.75px;top:611.22px;font-size:21px;line-height:21px;font-weight:700;color:#707070;letter-spacing:-0.02em;z-index:3;-webkit-text-stroke:0.35px #fff'>CONTRACTS</div>
<div class='t ' style='left:2178.75px;top:631.22px;font-size:21px;line-height:21px;font-weight:700;color:#707070;letter-spacing:-0.02em;z-index:3;-webkit-text-stroke:0.35px #fff'>TAGS</div>
<div class='r' style='left:2326.2px;top:619.8px;width:5.2px;height:5.2px;border-radius:50%;background:#999'></div>
<div class='r' style='left:2326.2px;top:628.4px;width:5.2px;height:5.2px;border-radius:50%;background:#999'></div>
<div class='r' style='left:2326.2px;top:637.0px;width:5.2px;height:5.2px;border-radius:50%;background:#999'></div>
<div class='t ' style='left:2387.5px;top:611.22px;font-size:21px;line-height:21px;font-weight:700;color:#707070;letter-spacing:-0.02em;z-index:3;-webkit-text-stroke:0.35px #fff'>LAST</div>
<div class='t ' style='left:2387.5px;top:631.22px;font-size:21px;line-height:21px;font-weight:700;color:#707070;letter-spacing:-0.02em;z-index:3;-webkit-text-stroke:0.35px #fff'>VIEWED</div>
<div class='r' style='left:2506.4px;top:619.8px;width:5.2px;height:5.2px;border-radius:50%;background:#999'></div>
<div class='r' style='left:2506.4px;top:628.4px;width:5.2px;height:5.2px;border-radius:50%;background:#999'></div>
<div class='r' style='left:2506.4px;top:637.0px;width:5.2px;height:5.2px;border-radius:50%;background:#999'></div>
<div class='r' style='left:708px;top:667px;width:1852px;height:18px;background:linear-gradient(rgba(0,0,0,0.065),rgba(0,0,0,0));z-index:2'></div>
<div class='r' style='left:708px;top:667px;width:1852px;height:108.33px;background:#f2f2f2;'></div>
<div class='r' style='left:735px;top:707.665px;width:27px;height:27px;background:#fff;border-radius:4px;box-sizing:border-box;border:3px solid #cdcdcd;z-index:1'></div>
<div class='t ' style='left:816px;top:710.34px;font-size:24px;line-height:24px;font-weight:400;color:#4d4d4d;letter-spacing:0.027em;z-index:1'>06/30/2028</div>
<div class='t ' style='left:1015px;top:683.34px;font-size:24px;line-height:24px;font-weight:400;color:#3a78d9;letter-spacing:-0.02em;z-index:1'>DAS Enterprise <span style='background:#fdfd5a;color:#4a4a4a;font-weight:700;letter-spacing:-0.045em;-webkit-text-stroke:0.35px #fdfd5a'>Learning Management</span></div>
<div class='t ' style='left:1015px;top:710.34px;font-size:24px;line-height:24px;font-weight:400;color:#3a78d9;letter-spacing:-0.02em;z-index:1'><span style='background:#fdfd5a;color:#4a4a4a;font-weight:700;letter-spacing:-0.045em;-webkit-text-stroke:0.35px #fdfd5a'>System</span> (<span style='background:#fdfd5a;color:#4a4a4a;font-weight:700;letter-spacing:-0.045em;-webkit-text-stroke:0.35px #fdfd5a'>LMS</span>) Amendment #3 DAS</div>
<div class='t ' style='left:1015px;top:737.34px;font-size:24px;line-height:24px;font-weight:400;color:#3a78d9;letter-spacing:-0.02em;z-index:1'>Enterprise <span style='background:#fdfd5a;color:#4a4a4a;font-weight:700;letter-spacing:-0.045em;-webkit-text-stroke:0.35px #fdfd5a'>Learning Management</span>…</div>
<div class='t ' style='left:1500px;top:696.84px;font-size:24px;line-height:24px;font-weight:400;color:#3a78d9;letter-spacing:-0.02em;z-index:1'>State of Ohio,</div>
<div class='t ' style='left:1500px;top:723.84px;font-size:24px;line-height:24px;font-weight:400;color:#3a78d9;letter-spacing:-0.02em;z-index:1'>Ohio</div>
<div class='t ' style='left:1734.5px;top:710.34px;font-size:24px;line-height:24px;font-weight:400;color:#4d4d4d;letter-spacing:-0.02em;z-index:1'>Eskillz Corp</div>
<div class='t ' style='right:426px;top:710.34px;font-size:24px;line-height:24px;font-weight:400;color:#4d4d4d;letter-spacing:0.0em;z-index:1'>0</div>
<div class='r' style='left:1014px;top:761.665px;width:78px;height:1.5px;background:#f8f86a;z-index:1'></div>
<div class='r' style='left:1103px;top:761.665px;width:25px;height:1.5px;background:#f8f86a;z-index:1'></div>
<div class='r' style='left:708px;top:775.33px;width:1852px;height:108.34px;background:#ffffff;'></div>
<div class='r' style='left:735px;top:816.0px;width:27px;height:27px;background:#fff;border-radius:4px;box-sizing:border-box;border:3px solid #cdcdcd;z-index:1'></div>
<div class='t ' style='left:816px;top:818.68px;font-size:24px;line-height:24px;font-weight:400;color:#4d4d4d;letter-spacing:0.027em;z-index:1'>06/30/2026</div>
<div class='t ' style='left:1015px;top:791.68px;font-size:24px;line-height:24px;font-weight:400;color:#3a78d9;letter-spacing:-0.02em;z-index:1'><span style='background:#fdfd5a;color:#4a4a4a;font-weight:700;letter-spacing:-0.045em;-webkit-text-stroke:0.35px #fdfd5a'>Learning Management System</span> (<span style='background:#fdfd5a;color:#4a4a4a;font-weight:700;letter-spacing:-0.045em;-webkit-text-stroke:0.35px #fdfd5a'>LMS</span>)</div>
<div class='t ' style='left:1015px;top:818.68px;font-size:24px;line-height:24px;font-weight:400;color:#3a78d9;letter-spacing:-0.02em;z-index:1'>Amendment #2 <span style='background:#fdfd5a;color:#4a4a4a;font-weight:700;letter-spacing:-0.045em;-webkit-text-stroke:0.35px #fdfd5a'>Learning Management</span></div>
<div class='t ' style='left:1015px;top:845.68px;font-size:24px;line-height:24px;font-weight:400;color:#3a78d9;letter-spacing:-0.02em;z-index:1'><span style='background:#fdfd5a;color:#4a4a4a;font-weight:700;letter-spacing:-0.045em;-webkit-text-stroke:0.35px #fdfd5a'>System</span> (<span style='background:#fdfd5a;color:#4a4a4a;font-weight:700;letter-spacing:-0.045em;-webkit-text-stroke:0.35px #fdfd5a'>LMS</span>) Amendment #2</div>
<div class='t ' style='left:1500px;top:805.18px;font-size:24px;line-height:24px;font-weight:400;color:#3a78d9;letter-spacing:-0.02em;z-index:1'>State of Ohio,</div>
<div class='t ' style='left:1500px;top:832.18px;font-size:24px;line-height:24px;font-weight:400;color:#3a78d9;letter-spacing:-0.02em;z-index:1'>Ohio</div>
<div class='t ' style='left:1734.5px;top:818.68px;font-size:24px;line-height:24px;font-weight:400;color:#4d4d4d;letter-spacing:-0.02em;z-index:1'>Eskillz Corp</div>
<div class='t ' style='right:426px;top:818.68px;font-size:24px;line-height:24px;font-weight:400;color:#4d4d4d;letter-spacing:0.0em;z-index:1'>0</div>
<div class='r' style='left:708px;top:883.67px;width:1852px;height:108.33px;background:#f2f2f2;'></div>
<div class='r' style='left:735px;top:924.3349999999999px;width:27px;height:27px;background:#fff;border-radius:4px;box-sizing:border-box;border:3px solid #cdcdcd;z-index:1'></div>
<div class='t ' style='left:816px;top:927.01px;font-size:24px;line-height:24px;font-weight:400;color:#4d4d4d;letter-spacing:0.027em;z-index:1'>06/30/2028</div>
<div class='t ' style='left:1015px;top:900.01px;font-size:24px;line-height:24px;font-weight:400;color:#3a78d9;letter-spacing:-0.02em;z-index:1'>DAS Enterprise <span style='background:#fdfd5a;color:#4a4a4a;font-weight:700;letter-spacing:-0.045em;-webkit-text-stroke:0.35px #fdfd5a'>Learning Management</span></div>
<div class='t ' style='left:1015px;top:927.01px;font-size:24px;line-height:24px;font-weight:400;color:#3a78d9;letter-spacing:-0.02em;z-index:1'><span style='background:#fdfd5a;color:#4a4a4a;font-weight:700;letter-spacing:-0.045em;-webkit-text-stroke:0.35px #fdfd5a'>System</span> (<span style='background:#fdfd5a;color:#4a4a4a;font-weight:700;letter-spacing:-0.045em;-webkit-text-stroke:0.35px #fdfd5a'>LMS</span>) DAS Enterprise <span style='background:#fdfd5a;color:#4a4a4a;font-weight:700;letter-spacing:-0.045em;-webkit-text-stroke:0.35px #fdfd5a'>Learning</span></div>
<div class='t ' style='left:1015px;top:954.01px;font-size:24px;line-height:24px;font-weight:400;color:#3a78d9;letter-spacing:-0.02em;z-index:1'><span style='background:#fdfd5a;color:#4a4a4a;font-weight:700;letter-spacing:-0.045em;-webkit-text-stroke:0.35px #fdfd5a'>Management System</span> (<span style='background:#fdfd5a;color:#4a4a4a;font-weight:700;letter-spacing:-0.045em;-webkit-text-stroke:0.35px #fdfd5a'>LMS</span>)</div>
<div class='t ' style='left:1500px;top:913.51px;font-size:24px;line-height:24px;font-weight:400;color:#3a78d9;letter-spacing:-0.02em;z-index:1'>State of Ohio,</div>
<div class='t ' style='left:1500px;top:940.51px;font-size:24px;line-height:24px;font-weight:400;color:#3a78d9;letter-spacing:-0.02em;z-index:1'>Ohio</div>
<div class='t ' style='left:1734.5px;top:927.01px;font-size:24px;line-height:24px;font-weight:400;color:#4d4d4d;letter-spacing:-0.02em;z-index:1'>Eskillz Corp</div>
<div class='t ' style='right:426px;top:927.01px;font-size:24px;line-height:24px;font-weight:400;color:#4d4d4d;letter-spacing:0.0em;z-index:1'>0</div>
<div class='r' style='left:708px;top:992px;width:1852px;height:108.33px;background:#ffffff;'></div>
<div class='r' style='left:735px;top:1032.665px;width:27px;height:27px;background:#fff;border-radius:4px;box-sizing:border-box;border:3px solid #cdcdcd;z-index:1'></div>
<div class='t ' style='left:816px;top:1035.34px;font-size:24px;line-height:24px;font-weight:400;color:#4d4d4d;letter-spacing:0.027em;z-index:1'>06/30/2028</div>
<div class='t ' style='left:1015px;top:1008.34px;font-size:24px;line-height:24px;font-weight:400;color:#3a78d9;letter-spacing:-0.02em;z-index:1'>DAS Enterprise <span style='background:#fdfd5a;color:#4a4a4a;font-weight:700;letter-spacing:-0.045em;-webkit-text-stroke:0.35px #fdfd5a'>Learning Management</span></div>
<div class='t ' style='left:1015px;top:1035.34px;font-size:24px;line-height:24px;font-weight:400;color:#3a78d9;letter-spacing:-0.02em;z-index:1'><span style='background:#fdfd5a;color:#4a4a4a;font-weight:700;letter-spacing:-0.045em;-webkit-text-stroke:0.35px #fdfd5a'>System</span> (<span style='background:#fdfd5a;color:#4a4a4a;font-weight:700;letter-spacing:-0.045em;-webkit-text-stroke:0.35px #fdfd5a'>LMS</span>) Amendment #2 DAS</div>
<div class='t ' style='left:1015px;top:1062.34px;font-size:24px;line-height:24px;font-weight:400;color:#3a78d9;letter-spacing:-0.02em;z-index:1'>Enterprise <span style='background:#fdfd5a;color:#4a4a4a;font-weight:700;letter-spacing:-0.045em;-webkit-text-stroke:0.35px #fdfd5a'>Learning Management</span>…</div>
<div class='t ' style='left:1500px;top:1021.84px;font-size:24px;line-height:24px;font-weight:400;color:#3a78d9;letter-spacing:-0.02em;z-index:1'>State of Ohio,</div>
<div class='t ' style='left:1500px;top:1048.84px;font-size:24px;line-height:24px;font-weight:400;color:#3a78d9;letter-spacing:-0.02em;z-index:1'>Ohio</div>
<div class='t ' style='left:1734.5px;top:1035.34px;font-size:24px;line-height:24px;font-weight:400;color:#4d4d4d;letter-spacing:-0.02em;z-index:1'>Eskillz Corp</div>
<div class='t ' style='right:426px;top:1035.34px;font-size:24px;line-height:24px;font-weight:400;color:#4d4d4d;letter-spacing:0.0em;z-index:1'>0</div>
<div class='r' style='left:1014px;top:1086.665px;width:78px;height:1.5px;background:#f8f86a;z-index:1'></div>
<div class='r' style='left:1103px;top:1086.665px;width:25px;height:1.5px;background:#f8f86a;z-index:1'></div>
<div class='r' style='left:708px;top:1100.33px;width:1852px;height:135.42px;background:#f2f2f2;'></div>
<div class='r' style='left:735px;top:1154.54px;width:27px;height:27px;background:#fff;border-radius:4px;box-sizing:border-box;border:3px solid #cdcdcd;z-index:1'></div>
<div class='t ' style='left:816px;top:1157.22px;font-size:24px;line-height:24px;font-weight:400;color:#4d4d4d;letter-spacing:0.027em;z-index:1'>06/30/2028</div>
<div class='t ' style='left:1015px;top:1130.22px;font-size:24px;line-height:24px;font-weight:400;color:#3a78d9;letter-spacing:-0.02em;z-index:1'>DAS Enterprise <span style='background:#fdfd5a;color:#4a4a4a;font-weight:700;letter-spacing:-0.045em;-webkit-text-stroke:0.35px #fdfd5a'>Learning Management</span></div>
<div class='t ' style='left:1015px;top:1157.22px;font-size:24px;line-height:24px;font-weight:400;color:#3a78d9;letter-spacing:-0.02em;z-index:1'><span style='background:#fdfd5a;color:#4a4a4a;font-weight:700;letter-spacing:-0.045em;-webkit-text-stroke:0.35px #fdfd5a'>System</span> (<span style='background:#fdfd5a;color:#4a4a4a;font-weight:700;letter-spacing:-0.045em;-webkit-text-stroke:0.35px #fdfd5a'>LMS</span>) Amendment #1 DAS</div>
<div class='t ' style='left:1015px;top:1184.22px;font-size:24px;line-height:24px;font-weight:400;color:#3a78d9;letter-spacing:-0.02em;z-index:1'>Enterprise <span style='background:#fdfd5a;color:#4a4a4a;font-weight:700;letter-spacing:-0.045em;-webkit-text-stroke:0.35px #fdfd5a'>Learning Management</span>…</div>
<div class='t ' style='left:1500px;top:1143.72px;font-size:24px;line-height:24px;font-weight:400;color:#3a78d9;letter-spacing:-0.02em;z-index:1'>State of Ohio,</div>
<div class='t ' style='left:1500px;top:1170.72px;font-size:24px;line-height:24px;font-weight:400;color:#3a78d9;letter-spacing:-0.02em;z-index:1'>Ohio</div>
<div class='t ' style='left:1734.5px;top:1157.22px;font-size:24px;line-height:24px;font-weight:400;color:#4d4d4d;letter-spacing:-0.02em;z-index:1'>Eskillz Corp</div>
<div class='t ' style='right:426px;top:1157.22px;font-size:24px;line-height:24px;font-weight:400;color:#4d4d4d;letter-spacing:0.0em;z-index:1'>0</div>
<div class='r' style='left:1014px;top:1208.54px;width:78px;height:1.5px;background:#f8f86a;z-index:1'></div>
<div class='r' style='left:1103px;top:1208.54px;width:25px;height:1.5px;background:#f8f86a;z-index:1'></div>
<div class='t ' style='left:2397px;top:1117.51px;font-size:24px;line-height:24px;font-weight:400;color:#4d4d4d;letter-spacing:-0.02em;z-index:1'>Nate</div>
<div class='t ' style='left:2397px;top:1144.51px;font-size:24px;line-height:24px;font-weight:400;color:#4d4d4d;letter-spacing:-0.02em;z-index:1'>Haskins –</div>
<div class='t ' style='left:2397px;top:1171.51px;font-size:24px;line-height:24px;font-weight:400;color:#4d4d4d;letter-spacing:0.035em;z-index:1'>01/16/2025</div>
<div class='t ' style='left:2397px;top:1198.51px;font-size:24px;line-height:24px;font-weight:400;color:#4d4d4d;letter-spacing:-0.02em;z-index:1'>03:40 PM</div>
<div class='r' style='left:708px;top:1235.75px;width:1852px;height:108.33px;background:#ffffff;'></div>
<div class='r' style='left:735px;top:1276.415px;width:27px;height:27px;background:#fff;border-radius:4px;box-sizing:border-box;border:3px solid #cdcdcd;z-index:1'></div>
<div class='t ' style='left:816px;top:1279.09px;font-size:24px;line-height:24px;font-weight:400;color:#4d4d4d;letter-spacing:0.027em;z-index:1'>11/20/2027</div>
<div class='t ' style='left:1015px;top:1252.09px;font-size:24px;line-height:24px;font-weight:400;color:#3a78d9;letter-spacing:-0.02em;z-index:1'>a variety of its own brand product line to</div>
<div class='t ' style='left:1015px;top:1279.09px;font-size:24px;line-height:24px;font-weight:400;color:#3a78d9;letter-spacing:-0.02em;z-index:1'>include but not limited to: Vector</div>
<div class='t ' style='left:1015px;top:1306.09px;font-size:24px;line-height:24px;font-weight:400;color:#3a78d9;letter-spacing:-0.02em;z-index:1'>Solutions a SaaS Complete Workforce…</div>
<div class='t ' style='left:1500px;top:1252.09px;font-size:24px;line-height:24px;font-weight:400;color:#3a78d9;letter-spacing:-0.02em;z-index:1'>Texas</div>
<div class='t ' style='left:1500px;top:1279.09px;font-size:24px;line-height:24px;font-weight:400;color:#3a78d9;letter-spacing:-0.02em;z-index:1'>Department of</div>
<div class='t ' style='left:1500px;top:1306.09px;font-size:24px;line-height:24px;font-weight:400;color:#3a78d9;letter-spacing:-0.02em;z-index:1'>Information…</div>
<div class='t ' style='left:1734.5px;top:1252.09px;font-size:24px;line-height:24px;font-weight:400;color:#4d4d4d;letter-spacing:-0.02em;z-index:1'>Targetsolutions</div>
<div class='t ' style='left:1734.5px;top:1279.09px;font-size:24px;line-height:24px;font-weight:400;color:#4d4d4d;letter-spacing:-0.02em;z-index:1'>Learning Llc D B</div>
<div class='t ' style='left:1734.5px;top:1306.09px;font-size:24px;line-height:24px;font-weight:400;color:#4d4d4d;letter-spacing:-0.02em;z-index:1'>A Vector…</div>
<div class='t ' style='right:426px;top:1279.09px;font-size:24px;line-height:24px;font-weight:400;color:#4d4d4d;letter-spacing:0.0em;z-index:1'>5</div>
<div class='r' style='left:708px;top:1344.08px;width:1852px;height:135.42px;background:#f2f2f2;'></div>
<div class='r' style='left:735px;top:1398.29px;width:27px;height:27px;background:#fff;border-radius:4px;box-sizing:border-box;border:3px solid #cdcdcd;z-index:1'></div>
<div class='t ' style='left:816px;top:1400.97px;font-size:24px;line-height:24px;font-weight:400;color:#4d4d4d;letter-spacing:0.027em;z-index:1'>03/05/2026</div>
<div class='t ' style='left:1015px;top:1400.97px;font-size:24px;line-height:24px;font-weight:400;color:#3a78d9;letter-spacing:-0.02em;z-index:1'>Acadis Readiness Suite - <span style='background:#fdfd5a;color:#4a4a4a;font-weight:700;letter-spacing:-0.045em;-webkit-text-stroke:0.35px #fdfd5a'>LMS</span></div>
<div class='t ' style='left:1500px;top:1387.47px;font-size:24px;line-height:24px;font-weight:400;color:#3a78d9;letter-spacing:-0.02em;z-index:1'>State of Iowa,</div>
<div class='t ' style='left:1500px;top:1414.47px;font-size:24px;line-height:24px;font-weight:400;color:#3a78d9;letter-spacing:-0.02em;z-index:1'>Iowa</div>
<div class='t ' style='left:1734.5px;top:1387.47px;font-size:24px;line-height:24px;font-weight:400;color:#4d4d4d;letter-spacing:-0.02em;z-index:1'>Envisage</div>
<div class='t ' style='left:1734.5px;top:1414.47px;font-size:24px;line-height:24px;font-weight:400;color:#4d4d4d;letter-spacing:-0.02em;z-index:1'>Technologies Llc</div>
<div class='t ' style='right:426px;top:1400.97px;font-size:24px;line-height:24px;font-weight:400;color:#4d4d4d;letter-spacing:0.0em;z-index:1'>9</div>
<div class='t ' style='left:2397px;top:1361.26px;font-size:24px;line-height:24px;font-weight:400;color:#4d4d4d;letter-spacing:-0.02em;z-index:1'>Nate</div>
<div class='t ' style='left:2397px;top:1388.26px;font-size:24px;line-height:24px;font-weight:400;color:#4d4d4d;letter-spacing:-0.02em;z-index:1'>Haskins –</div>
<div class='t ' style='left:2397px;top:1415.26px;font-size:24px;line-height:24px;font-weight:400;color:#4d4d4d;letter-spacing:0.035em;z-index:1'>03/27/2025</div>
<div class='t ' style='left:2397px;top:1442.26px;font-size:24px;line-height:24px;font-weight:400;color:#4d4d4d;letter-spacing:-0.02em;z-index:1'>03:40 PM</div>
</body></html>
